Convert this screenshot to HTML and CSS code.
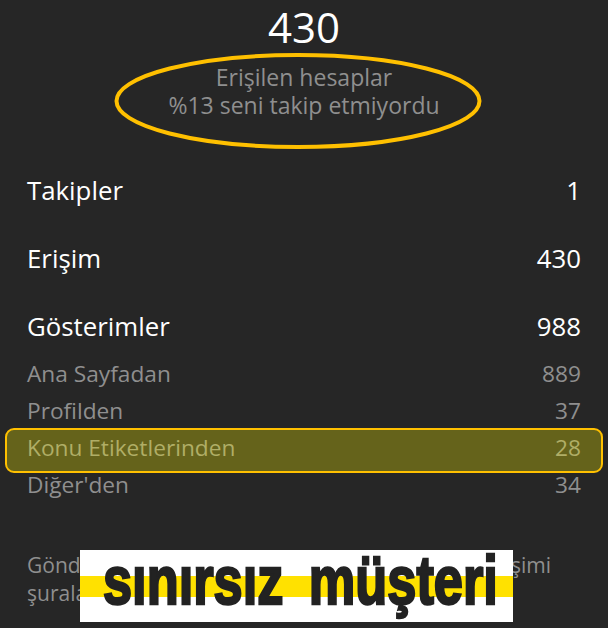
FILE: index.html
```html
<!DOCTYPE html>
<html>
  <head>
    <meta charset="utf-8">
    <title>Gönderi İstatistikleri</title>
    <link rel="stylesheet" href="styles.css">
  </head>
  <body>
    <div class="page">
      <div class="head">
        <div class="head-num">430</div>
        <div class="head-sub">Erişilen hesaplar</div>
        <div class="head-sub">%13 seni takip etmiyordu</div>
      </div>

      <div class="main-row"><span>Takipler</span><span>1</span></div>
      <div class="main-row"><span>Erişim</span><span>430</span></div>
      <div class="main-row"><span>Gösterimler</span><span>988</span></div>

      <div class="sub-rows">
        <div class="sub-row"><span>Ana Sayfadan</span><span>889</span></div>
        <div class="sub-row"><span>Profilden</span><span>37</span></div>
        <div class="sub-row"><span>Konu Etiketlerinden</span><span>28</span></div>
        <div class="sub-row"><span>Diğer'den</span><span>34</span></div>
      </div>

      <div class="note">
        <div class="note-line"><span>Gönde</span><span>şimi</span></div>
        <div class="note-line"><span>şurala</span></div>
      </div>

      <svg class="ring" width="372" height="100" viewBox="0 0 372 100">
        <ellipse cx="186" cy="50" rx="181.5" ry="46" fill="none" stroke="#ffc000" stroke-width="4"/>
      </svg>
      <div class="mark"></div>
      <div class="banner"><span class="banner-text">sınırsız müşteri</span></div>
    </div>
  </body>
</html>
```

FILE: styles.css
```css
body {
  margin: 0;
  background-color: #262626;
  font-family: "Open Sans", "Noto Sans", sans-serif;
}
.page {
  position: relative;
  height: 628px;
  padding: 0 27px;
  box-sizing: border-box;
  overflow: hidden;
}
.head {
  height: 156px;
  padding-top: 1px;
  box-sizing: border-box;
  text-align: center;
}
.head-num {
  height: 62px;
  font-size: 42px;
  line-height: 52px;
  color: #fff;
}
.head-sub {
  font-size: 23px;
  line-height: 28px;
  color: #8f8f8f;
}
.main-row {
  display: flex;
  justify-content: space-between;
  height: 68px;
  font-size: 25.8px;
  line-height: 68px;
  color: #fff;
}
.sub-rows {
  margin-top: -5px;
}
.sub-row {
  display: flex;
  justify-content: space-between;
  height: 37px;
  font-size: 22.7px;
  line-height: 37px;
  color: #8f8f8f;
}
.note {
  margin: 48px 30px 0 0;
  font-size: 21px;
  line-height: 28px;
  color: #8f8f8f;
}
.note-line {
  display: flex;
  justify-content: space-between;
}
.ring {
  position: absolute;
  left: 112px;
  top: 51px;
}
.mark {
  position: absolute;
  left: 5px;
  top: 428px;
  width: 598px;
  height: 45px;
  box-sizing: border-box;
  border: 2px solid #ffc000;
  border-radius: 9px;
  background-color: rgba(255, 248, 4, 0.295);
}
.banner {
  position: absolute;
  left: 80px;
  top: 550px;
  width: 433px;
  height: 72px;
  background: linear-gradient(#fff 26px, #ffe100 26px, #ffe100 47px, #fff 47px);
  overflow: hidden;
}
.banner-text {
  position: absolute;
  left: 23px;
  top: -10px;
  font-family: "Liberation Sans", sans-serif;
  font-size: 68px;
  line-height: 80px;
  font-weight: 700;
  word-spacing: 14px;
  white-space: nowrap;
  color: #222;
  -webkit-text-stroke: 2.5px #222;
  transform: scaleX(0.77);
  transform-origin: left top;
}
```
